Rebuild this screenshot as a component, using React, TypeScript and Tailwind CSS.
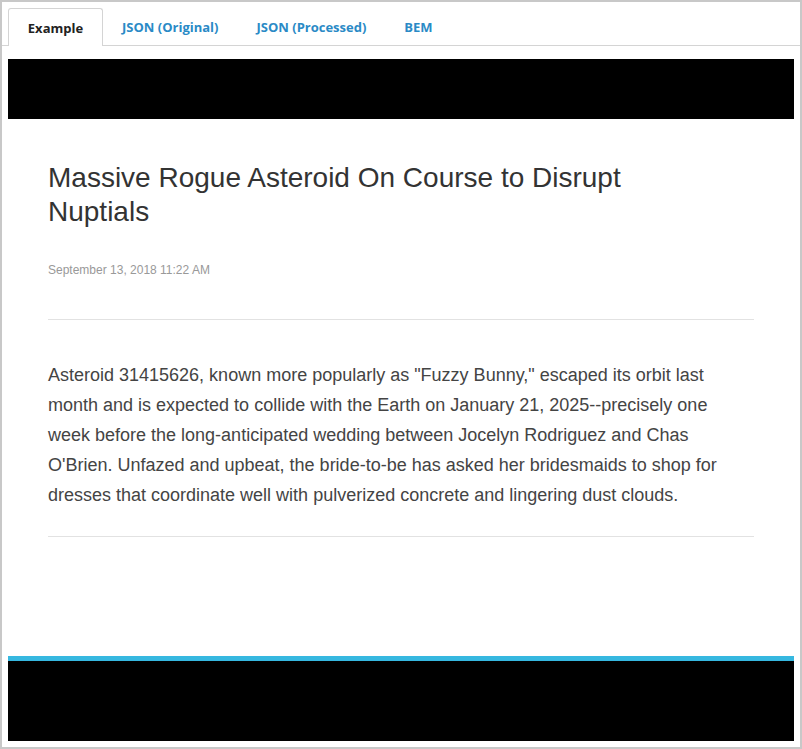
const tabs = ['Example', 'JSON (Original)', 'JSON (Processed)', 'BEM'];

export default function App() {
  return (
    <div className="w-[802px] h-[749px] border-2 border-[#c8c8c8] bg-white overflow-hidden">
      <div className="flex pl-[6px] pt-[6px] pr-[3px] border-b border-[#d4d4d4] h-[44px] items-end" style={{ fontFamily: '"Open Sans", sans-serif' }}>
        {tabs.map((t, i) => (
          <div
            key={t}
            className={
              i === 0
                ? 'h-[38px] w-[95px] flex items-center justify-center pt-[2px] border border-b-0 border-[#d4d4d4] rounded-t-[3px] bg-white -mb-px text-[13px] font-bold text-[#222]'
                : 'h-[38px] px-[19px] pt-[4px] flex items-center text-[13px] font-bold text-[#2a8ac6]'
            }
          >
            {t}
          </div>
        ))}
      </div>
      <div className="mx-[6px] mt-[13px] h-[60px] bg-black" />
      <div className="px-[46px] pt-[42px]" style={{ fontFamily: '"Liberation Sans", Arial, sans-serif' }}>
        <h1 className="max-w-[640px] text-[28px] leading-[34px] text-[#333] font-normal">
          Massive Rogue Asteroid On Course to Disrupt Nuptials
        </h1>
        <div className="mt-[32px] text-[12px] text-[#999]">September 13, 2018 11:22 AM</div>
        <hr className="mt-[40px] border-[#e2e2e2]" />
        <p className="mt-[40px] text-[18px] leading-[30px] text-[#444]">
          Asteroid 31415626, known more popularly as "Fuzzy Bunny," escaped its orbit last month and is expected to collide with the Earth on January 21, 2025--precisely one week before the long-anticipated wedding between Jocelyn Rodriguez and Chas O'Brien. Unfazed and upbeat, the bride-to-be has asked her bridesmaids to shop for dresses that coordinate well with pulverized concrete and lingering dust clouds.
        </p>
        <hr className="mt-[26px] border-[#e2e2e2]" />
      </div>
      <div className="mx-[6px] mt-[119px] h-[5px] bg-[#36b8e0]" />
      <div className="mx-[6px] h-[80px] bg-black" />
    </div>
  );
}
